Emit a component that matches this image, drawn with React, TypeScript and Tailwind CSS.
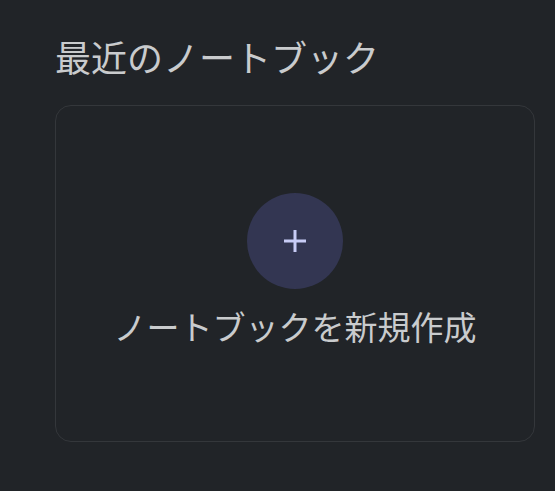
import React from "react";

export default function App() {
  return (
    <div
      className="min-h-[491px] w-full bg-[#212428] pl-[55px] pr-[20px] pt-[36px]"
      style={{ fontFamily: '"Noto Sans CJK JP", "Noto Sans", sans-serif' }}
    >
      <h2 className="text-[36px] leading-[40px] text-[#c9cbcd] font-normal">
        最近のノートブック
      </h2>
      <div className="mt-[29px] w-[480px] h-[337px] rounded-2xl border border-[#34373b] bg-[#212428] flex flex-col items-center pt-[87px]">
        <div className="w-[96px] h-[96px] rounded-full bg-[#333652] flex items-center justify-center">
          <svg width="24" height="24" viewBox="0 0 24 24">
            <path d="M12 1v22M1 12h22" stroke="#c8ccf6" strokeWidth="3" />
          </svg>
        </div>
        <div className="mt-[17px] text-[33px] leading-[40px] text-[#c9cbcd]">
          ノートブックを新規作成
        </div>
      </div>
    </div>
  );
}
